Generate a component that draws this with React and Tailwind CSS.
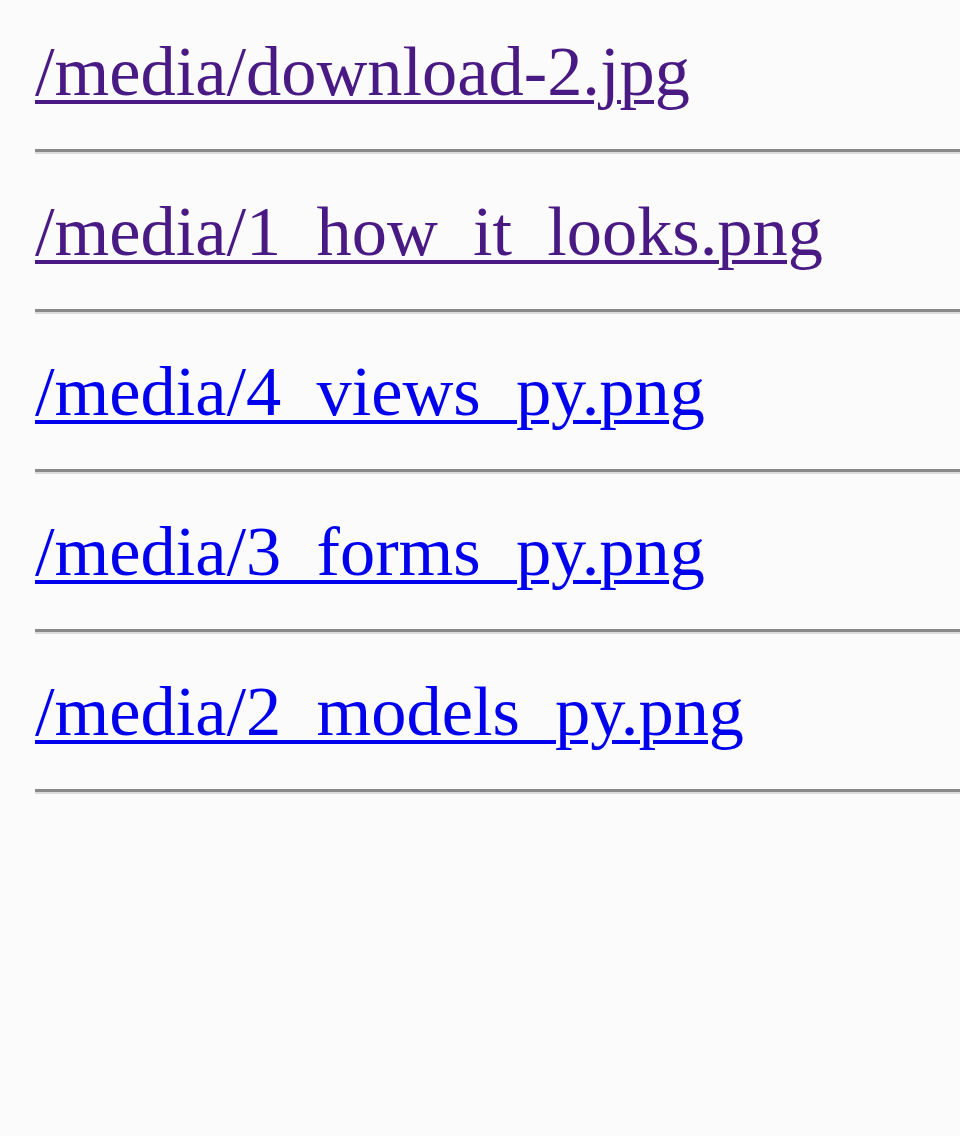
const links = [
  { href: "/media/download-2.jpg", visited: true },
  { href: "/media/1_how_it_looks.png", visited: true },
  { href: "/media/4_views_py.png", visited: false },
  { href: "/media/3_forms_py.png", visited: false },
  { href: "/media/2_models_py.png", visited: false },
];

export default function App() {
  return (
    <div className="min-h-[1136px] bg-[#fbfbfb] pt-[35px] pl-[35px] font-['Liberation_Serif',serif]">
      {links.map((link) => (
        <div key={link.href}>
          <div className="h-[73px] text-[70.4px] leading-[73px] whitespace-nowrap">
            <a
              href={link.href}
              className={`underline decoration-[4px] underline-offset-[5px] ${
                link.visited ? "text-[#4a1a84]" : "text-[#0000ee]"
              }`}
            >
              {link.href}
            </a>
          </div>
          <div className="my-[41px] h-[5px] border-t-[3px] border-b-[2px] border-t-[#8a8a8a] border-b-[#dcdcdc]" />
        </div>
      ))}
    </div>
  );
}
